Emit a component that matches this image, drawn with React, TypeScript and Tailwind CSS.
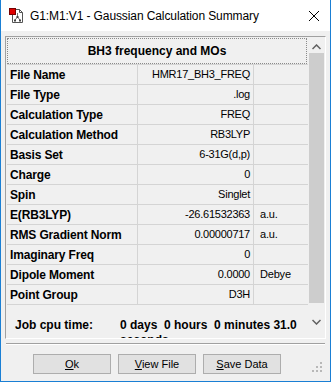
import React from "react";

const rows: [string, string, string][] = [
  ["File Name", "HMR17_BH3_FREQ", ""],
  ["File Type", ".log", ""],
  ["Calculation Type", "FREQ", ""],
  ["Calculation Method", "RB3LYP", ""],
  ["Basis Set", "6-31G(d,p)", ""],
  ["Charge", "0", ""],
  ["Spin", "Singlet", ""],
  ["E(RB3LYP)", "-26.61532363", "a.u."],
  ["RMS Gradient Norm", "0.00000717", "a.u."],
  ["Imaginary Freq", "0", ""],
  ["Dipole Moment", "0.0000", "Debye"],
  ["Point Group", "D3H", ""],
];

function TitleIcon() {
  return (
    <svg width="16" height="16" viewBox="0 0 16 16" className="shrink-0">
      <path d="M3.5 1.5 H10.5 L13.5 4.5 V14.5 H3.5 Z" fill="#fff" stroke="#555" strokeWidth="1" />
      <path d="M10.5 1.5 V4.5 H13.5" fill="none" stroke="#555" strokeWidth="1" />
      <line x1="8.5" y1="5" x2="8.5" y2="9" stroke="#777" strokeWidth="1" />
      <line x1="8.5" y1="9" x2="6" y2="12" stroke="#777" strokeWidth="1" />
      <line x1="8.5" y1="9" x2="11" y2="12" stroke="#777" strokeWidth="1" />
      <rect x="7.5" y="8" width="2" height="2" fill="#444" />
      <rect x="5" y="11.5" width="2" height="2" fill="#444" />
      <rect x="10" y="11.5" width="2" height="2" fill="#444" />
      <rect x="0.5" y="0.5" width="6" height="6" fill="#e00000" stroke="#700" strokeWidth="1" />
    </svg>
  );
}

export default function App() {
  return (
    <div className="w-[331px] h-[382px] flex flex-col bg-[#f0f0f0] border-x border-b border-[#1a7fd4] font-['Liberation_Sans',Arial,sans-serif] text-black overflow-hidden relative">
      {/* Title bar */}
      <div className="h-[31px] bg-white flex items-center shrink-0">
        <div className="ml-[8px] mt-[1px]">
          <TitleIcon />
        </div>
        <div className="ml-[5px] text-[12px] tracking-[-0.1px] text-black">
          G1:M1:V1 - Gaussian Calculation Summary
        </div>
        <div className="ml-auto mr-[11px] w-[10px] h-[10px]">
          <svg width="10" height="10" viewBox="0 0 10 10">
            <line x1="0" y1="0" x2="10" y2="10" stroke="#000" strokeWidth="1" />
            <line x1="10" y1="0" x2="0" y2="10" stroke="#000" strokeWidth="1" />
          </svg>
        </div>
      </div>

      {/* Panel */}
      <div className="mt-[5px] ml-[4px] w-[321px] h-[303px] border border-t-[#a0a0a0] border-l-[#a0a0a0] border-r-white border-b-white flex shrink-0 overflow-hidden">
        <div className="w-[302px] h-full pl-[1px] flex flex-col overflow-hidden">
          {/* Header */}
          <div className="h-[28px] shrink-0 border-b border-[#d4d4d4] pt-[1px] pr-[1px]">
            <div className="h-[26px] border border-dotted border-[#8a8a8a] flex items-center justify-center text-[12px] font-bold">
              BH3 frequency and MOs
            </div>
          </div>
          {rows.map(([label, value, unit]) => (
            <div key={label} className="h-[20px] shrink-0 flex border-b border-[#d4d4d4]">
              <div className="w-[131px] border-r border-[#d4d4d4] pl-[3px] flex items-center text-[12px] font-bold tracking-[-0.15px] whitespace-nowrap">
                {label}
              </div>
              <div className="w-[116px] border-r border-[#d4d4d4] pr-[3px] flex items-center justify-end text-[11px] tracking-[-0.25px] whitespace-nowrap">
                {value}
              </div>
              <div className="w-[54px] pl-[6px] flex items-center text-[11px] tracking-[-0.2px] whitespace-nowrap">
                {unit}
              </div>
            </div>
          ))}
          {/* Job cpu time */}
          <div className="flex-1 flex pt-[13px] overflow-hidden">
            <div className="w-[113px] pl-[8px] text-[12px] leading-[15px] font-bold shrink-0">Job cpu time:</div>
            <div className="w-[186px] text-[12px] leading-[15px] font-bold whitespace-pre-wrap">
              {"0 days  0 hours  0 minutes 31.0 seconds"}
            </div>
          </div>
        </div>
        {/* Scrollbar */}
        <div className="w-[17px] h-full bg-[#f0f0f0] flex flex-col">
          <div className="h-[16px] flex items-center justify-center shrink-0 pt-[4px]">
            <svg width="9" height="6" viewBox="0 0 9 6">
              <path d="M0.5 5 L4.5 1 L8.5 5" fill="none" stroke="#606060" strokeWidth="1.5" />
            </svg>
          </div>
          <div className="h-[250px] mx-[1px] bg-[#cdcdcd] shrink-0" />
          <div className="flex-1 flex items-center justify-center pt-[2px]">
            <svg width="9" height="6" viewBox="0 0 9 6">
              <path d="M0.5 1 L4.5 5 L8.5 1" fill="none" stroke="#606060" strokeWidth="1.5" />
            </svg>
          </div>
        </div>
      </div>

      {/* Separator */}
      <div className="mt-[4px] mx-[5px] h-[2px] border-t border-[#a0a0a0] border-b border-b-white shrink-0" />

      {/* Buttons */}
      <div className="mt-[9px] ml-[32px] flex gap-[7px] shrink-0">
        <button className="w-[78px] h-[20px] bg-[#e1e1e1] border border-[#adadad] text-[11px] flex items-center justify-center">
          <span><span className="underline">O</span>k</span>
        </button>
        <button className="w-[78px] h-[20px] bg-[#e1e1e1] border border-[#adadad] text-[11px] flex items-center justify-center">
          <span><span className="underline">V</span>iew File</span>
        </button>
        <button className="w-[78px] h-[20px] bg-[#e1e1e1] border border-[#adadad] text-[11px] flex items-center justify-center">
          <span><span className="underline">S</span>ave Data</span>
        </button>
      </div>

      {/* Size grip */}
      <div className="absolute right-[8px] bottom-[9px]">
        <svg width="10" height="10" viewBox="0 0 10 10">
          <rect x="8" y="0" width="2" height="2" fill="#b8b8b8" />
          <rect x="4" y="4" width="2" height="2" fill="#b8b8b8" />
          <rect x="8" y="4" width="2" height="2" fill="#b8b8b8" />
          <rect x="0" y="8" width="2" height="2" fill="#b8b8b8" />
          <rect x="4" y="8" width="2" height="2" fill="#b8b8b8" />
          <rect x="8" y="8" width="2" height="2" fill="#b8b8b8" />
        </svg>
      </div>
    </div>
  );
}
